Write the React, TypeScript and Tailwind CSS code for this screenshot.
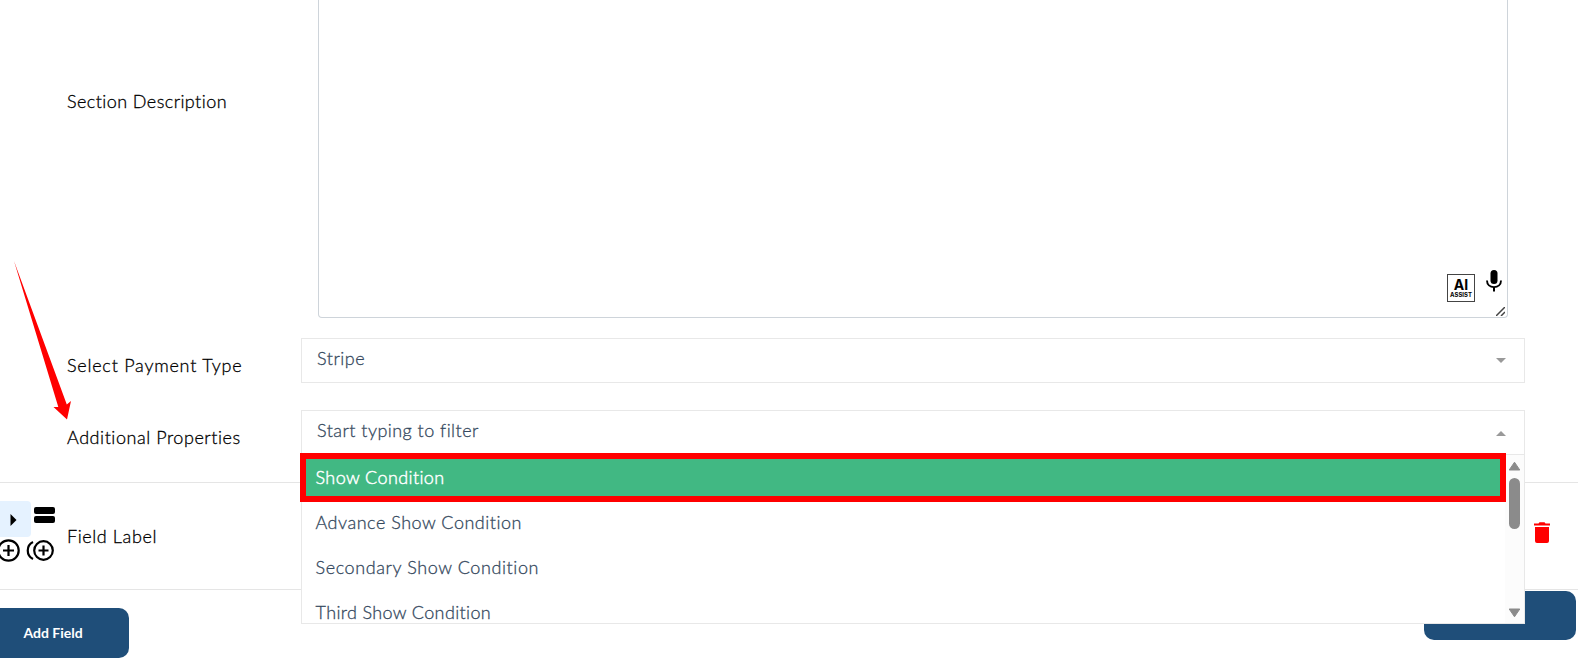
import clsx from "clsx";

const options = [
  { label: "Show Condition", spacing: "tracking-[0.4px]" },
  { label: "Advance Show Condition", spacing: "tracking-[0.52px]" },
  { label: "Secondary Show Condition", spacing: "tracking-[0.6px]" },
  { label: "Third Show Condition", spacing: "tracking-[0.36px]" },
];

function Label({ text, className }: { text: string; className?: string }) {
  return (
    <div className="w-[301px] shrink-0 pl-[67px] text-black">
      <span className={clsx("block whitespace-nowrap leading-6", className)}>{text}</span>
    </div>
  );
}

function AiAssist() {
  return (
    <div className="mt-[4px] flex h-7 w-7 flex-col items-center justify-center border border-[#444] bg-white font-['Inter'] text-black [-webkit-text-stroke:0px]">
      <span className="text-[14px] leading-[13px] font-bold">AI</span>
      <span className="text-[6px] leading-[8px] font-bold">ASSIST</span>
    </div>
  );
}

function MicIcon() {
  return (
    <svg width="16" height="23" viewBox="0 0 16 23">
      <rect x="4.5" y="0" width="7" height="14" rx="3.5" fill="#000" />
      <path d="M1 10.5c0 4 3 6.6 7 6.6s7-2.6 7-6.6" fill="none" stroke="#000" strokeWidth="1.9" />
      <path d="M8 17v4.5" stroke="#000" strokeWidth="2" />
    </svg>
  );
}

function PlusCircles() {
  return (
    <svg width="56" height="24" viewBox="0 0 56 24" fill="none" stroke="#000" strokeWidth="2.2">
      <circle cx="8.5" cy="12.5" r="10.2" />
      <path d="M3 12.5h11M8.5 7v11" />
      <circle cx="43.5" cy="12.5" r="9.3" />
      <path d="M38.5 12.5h10M43.5 7.5v10" />
      <path d="M33 4c-7 3.500-7 13.500 0 17" />
    </svg>
  );
}

function TrashIcon() {
  return (
    <svg width="16" height="22" viewBox="0 0 16 22" fill="#f00">
      <path d="M0 1.500h4.500l1-1.200h5l1 1.200H16v2H0zM1 5h14v14a2 2 0 0 1-2 2H3a2 2 0 0 1-2-2z" />
    </svg>
  );
}

function OptionList() {
  return (
    <div className="absolute -left-px top-[43px] z-10 flex h-[170px] w-[1224px] border border-[#e8e8e8] bg-white">
      <div className="h-full flex-1 overflow-hidden">
        {options.map((o, i) => (
          <div
            key={o.label}
            className={clsx(
              "flex h-[45px] items-center pl-[13.5px] whitespace-nowrap",
              i === 0 ? "bg-[#41b883] text-white [-webkit-text-stroke:0.45px]" : "text-[#35495e]",
              o.spacing
            )}
          >
            {o.label}
          </div>
        ))}
      </div>
      <div className="flex w-[19px] flex-col items-center bg-[#fcfcfc] pt-[6px] pb-[5px]">
        <svg width="13" height="10" viewBox="0 0 13 10">
          <path d="M6.5 1.200 11.800 9H1.200z" fill="#8b8b8b" stroke="#8b8b8b" strokeLinejoin="round" />
        </svg>
        <div className="mt-[7px] h-[51px] w-[11px] rounded-full bg-[#8b8b8b]" />
        <svg className="mt-auto" width="13" height="10" viewBox="0 0 13 10">
          <path d="M6.5 8.800 11.800 1H1.200z" fill="#8b8b8b" stroke="#8b8b8b" strokeLinejoin="round" />
        </svg>
      </div>
      {/* highlight frame */}
      <div className="absolute -left-[2px] -top-[2px] h-[49px] w-[1206px] border-[6px] border-[#f00]" />
    </div>
  );
}

export default function App() {
  return (
    <div className="relative h-[661px] w-full overflow-hidden bg-white font-['Lato',sans-serif] text-[18px] font-light [-webkit-text-stroke:0.3px]">
      <div className="flex h-[318px]">
        <Label text="Section Description" className="mt-[89px] tracking-[0.43px]" />
        <div className="ml-[17px] flex w-[1190px] items-end justify-end rounded-b border border-t-0 border-[#ced4da]">
          <div className="relative flex h-[47px] items-start gap-[11px] pr-[5px]">
            <AiAssist />
            <MicIcon />
            <svg className="absolute right-[2px] bottom-[1px]" width="9" height="9" viewBox="0 0 9 9">
              <path d="M0 9 9 0M5 9l4-4" stroke="#444" strokeWidth="1.5" />
            </svg>
          </div>
        </div>
      </div>

      <div className="mt-5 flex h-[45px]">
        <Label text="Select Payment Type" className="mt-[15px] tracking-[0.77px]" />
        <div className="flex w-[1224px] justify-between border border-[#e8e8e8] pr-[18px] pl-[15px] text-[#35495e]">
          <span className="mt-[7px] leading-6 tracking-[0.5px]">Stripe</span>
          <svg className="mt-[19px]" width="10" height="5" viewBox="0 0 10 5">
            <path d="M0 0h10L5 5z" fill="#999" />
          </svg>
        </div>
      </div>

      <div className="mt-[27px] flex h-[45px]">
        <Label text="Additional Properties" className="mt-[15px] tracking-[0.55px]" />
        <div className="relative flex w-[1224px] justify-between border border-[#e8e8e8] pr-[18px] pl-[15px] text-[#35495e]">
          <span className="mt-[7px] leading-6 tracking-[0.46px]">Start typing to filter</span>
          <svg className="mt-[20px]" width="10" height="5" viewBox="0 0 10 5">
            <path d="M0 5h10L5 0z" fill="#999" />
          </svg>
          <OptionList />
        </div>
      </div>

      <div className="mt-[27px] flex h-[108px] w-[1578px] justify-between border-y border-[#e5e5e5]">
        <div className="flex">
          <div className="w-[67px] pt-[18px]">
            <div className="flex gap-[3px]">
              <div className="flex h-9 w-[31px] items-center rounded-r bg-[#e5f2ff] pt-px pl-[10px]">
                <svg width="7" height="12" viewBox="0 0 7 12">
                  <path d="M.5 0 6.500 6 .5 12z" />
                </svg>
              </div>
              <div className="flex flex-col gap-[2px] pt-[5.5px]">
                <div className="h-[7px] w-[21px] rounded-[2px] bg-black" />
                <div className="h-[7px] w-[21px] rounded-[2px] bg-black" />
              </div>
            </div>
            <div className="mt-px">
              <PlusCircles />
            </div>
          </div>
          <span className="mt-[41px] leading-6 tracking-[0.6px]">Field Label</span>
        </div>
        <div className="mt-[39px] mr-[28px]">
          <TrashIcon />
        </div>
      </div>

      <div className="flex items-start justify-between pr-[10px]">
        <button className="mt-[18px] h-[49.5px] w-[129px] rounded-r-[10px] bg-[#1f4e79] pr-[23px] text-[14px] font-bold text-white [-webkit-text-stroke:0px]">
          Add Field
        </button>
        <div className="mt-px h-[49px] w-[152px] rounded-[10px] bg-[#1f4e79]" />
      </div>

      <svg className="pointer-events-none absolute top-[258px] left-[12px]" width="62" height="164" viewBox="12 258 62 164">
        <path d="M14 261 66.800 404.500 71 401 67 419.500 53.500 407 58.300 407z" fill="#f00" />
      </svg>
    </div>
  );
}
